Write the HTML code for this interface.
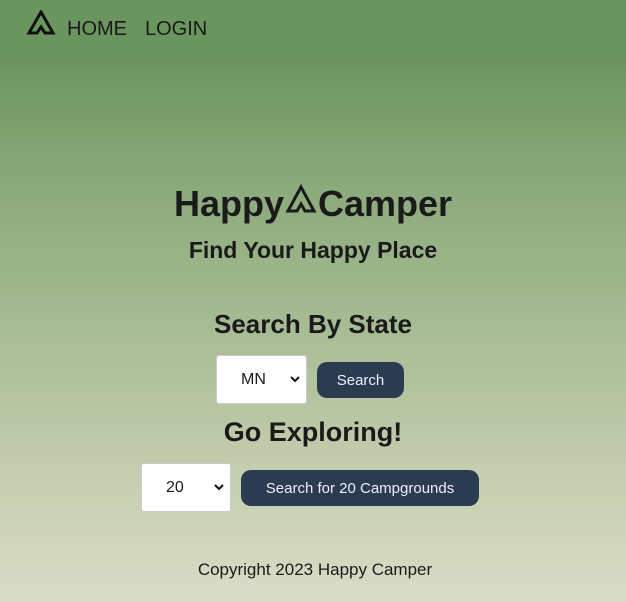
<!DOCTYPE html>
<html><head><style>
html,body{margin:0;padding:0}
body{width:626px;height:602px;position:relative;overflow:hidden;font-family:"Liberation Sans",sans-serif;color:#1a1a1a;
background:linear-gradient(to bottom,#6b955f 0px,#6b955f 60px,#8aa97a 180px,#a9bd96 340px,#c4cdae 470px,#dadcc8 602px);}
.a{position:absolute;white-space:nowrap}
.c{left:0;width:626px;text-align:center;font-weight:bold}
.sel{position:absolute;background:#fff;border:1px solid #ccc;border-radius:3px;font-size:16px;box-sizing:border-box}
.sel svg{position:absolute;right:6px;top:20px}
.btn{position:absolute;background:#2c3c50;color:#eef;border-radius:10px;font-size:15px;text-align:center;box-sizing:border-box}
</style></head><body>
<svg class="a" style="left:26px;top:10px" width="30" height="26" viewBox="0 0 30 26"><path d="M15 2 L3 23 L11 23 L15 17 L19 23 L27 23 Z" fill="none" stroke="#111" stroke-width="3" stroke-linejoin="miter"/></svg>
<div class="a" style="left:67px;top:18px;font-size:20px">HOME</div>
<div class="a" style="left:145px;top:18px;font-size:20px">LOGIN</div>
<div class="a c" style="top:183px;font-size:36px;letter-spacing:0">Happy<svg width="34" height="30" viewBox="0 0 34 30" style="vertical-align:2px"><path d="M17 3 L4 27 L13 27 L17 20 L21 27 L30 27 Z" fill="none" stroke="#1a1a1a" stroke-width="3"/></svg>Camper</div>
<div class="a c" style="top:237px;font-size:23px">Find Your Happy Place</div>
<div class="a c" style="top:309px;font-size:26px">Search By State</div>
<div class="sel" style="left:216px;top:355px;width:91px;height:49px;padding:15px 0 0 24px">MN<svg width="10" height="7" viewBox="0 0 10 7"><path d="M1 1 L5 5 L9 1" fill="none" stroke="#111" stroke-width="2"/></svg></div>
<div class="btn" style="left:317px;top:362px;width:87px;height:36px;line-height:37px">Search</div>
<div class="a c" style="top:417px;font-size:27px">Go Exploring!</div>
<div class="sel" style="left:141px;top:463px;width:90px;height:49px;padding:15px 0 0 24px">20<svg width="10" height="7" viewBox="0 0 10 7"><path d="M1 1 L5 5 L9 1" fill="none" stroke="#111" stroke-width="2"/></svg></div>
<div class="btn" style="left:241px;top:470px;width:238px;height:36px;line-height:37px">Search for 20 Campgrounds</div>
<div class="a" style="left:0;width:630px;text-align:center;top:560px;font-size:17px">Copyright 2023 Happy Camper</div>
</body></html>
